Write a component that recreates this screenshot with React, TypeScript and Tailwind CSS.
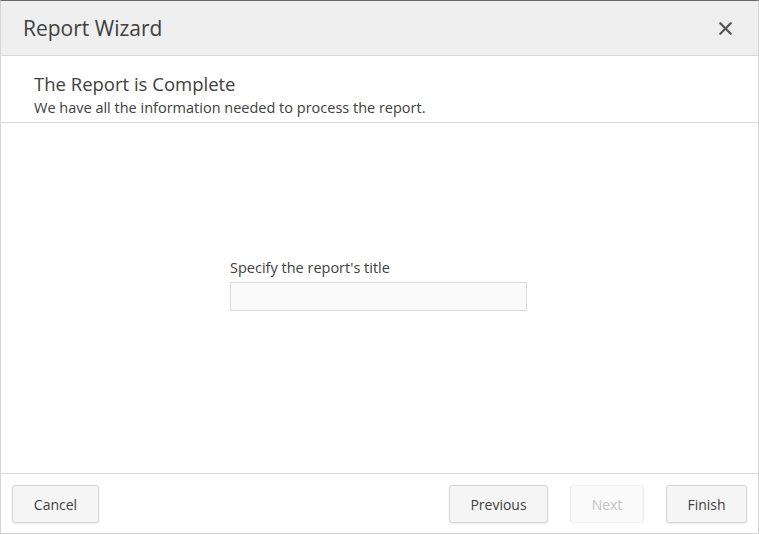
import { X } from 'lucide-react'

const FONT = { fontFamily: '"Segoe UI", "Open Sans", "Noto Sans", sans-serif' }

function Button({ label, disabled, w }: { label: string; disabled?: boolean; w: string }) {
  return (
    <button
      disabled={disabled}
      className={`h-[38px] ${w} rounded-[3px] border pt-[1px] text-[14px] ${
        disabled
          ? 'border-[#ececec] bg-[#fafafa] text-[#c4c4c4]'
          : 'border-[#d6d6d6] bg-[#f5f5f5] text-[#404040] shadow-[0_1px_2px_rgba(0,0,0,0.08)]'
      }`}
    >
      {label}
    </button>
  )
}

export default function App() {
  return (
    <div
      style={FONT}
      className="flex h-[534px] w-[759px] flex-col border-x border-b border-t border-x-[#d4d4d4] border-b-[#d4d4d4] border-t-[#6b6b6b] bg-white text-[#404040]"
    >
      <header className="flex h-[55px] shrink-0 items-center justify-between border-b border-[#d8d8d8] bg-[#efefef] pl-[22px] pr-[22px] pt-[2px]">
        <h1 className="text-[21px] text-[#404040]">Report Wizard</h1>
        <X className="mb-[2px] h-[21px] w-[21px] text-[#555]" strokeWidth={2.6} />
      </header>

      <section className="flex h-[67px] shrink-0 flex-col justify-center border-b border-[#d8d8d8] px-[33px] pt-[11px]">
        <h2 className="text-[18.5px] leading-[26px]">The Report is Complete</h2>
        <p className="text-[14.5px] leading-[22px]">We have all the information needed to process the report.</p>
      </section>

      <main className="flex flex-1 items-center justify-center pr-[2px]">
        <div className="mb-[26px] flex w-[297px] flex-col">
          <label className="mb-[5px] text-[14.5px] leading-[18px]">Specify the report's title</label>
          <input className="h-[29px] w-full border border-[#dadada] bg-[#fafafa] px-2 text-[14px] outline-none" />
        </div>
      </main>

      <footer className="flex h-[60px] shrink-0 items-center justify-between border-t border-[#d8d8d8] px-[11px]">
        <Button label="Cancel" w="w-[87px]" />
        <div className="flex gap-[22px]">
          <Button label="Previous" w="w-[99px]" />
          <Button label="Next" w="w-[74px]" disabled />
          <Button label="Finish" w="w-[81px]" />
        </div>
      </footer>
    </div>
  )
}
